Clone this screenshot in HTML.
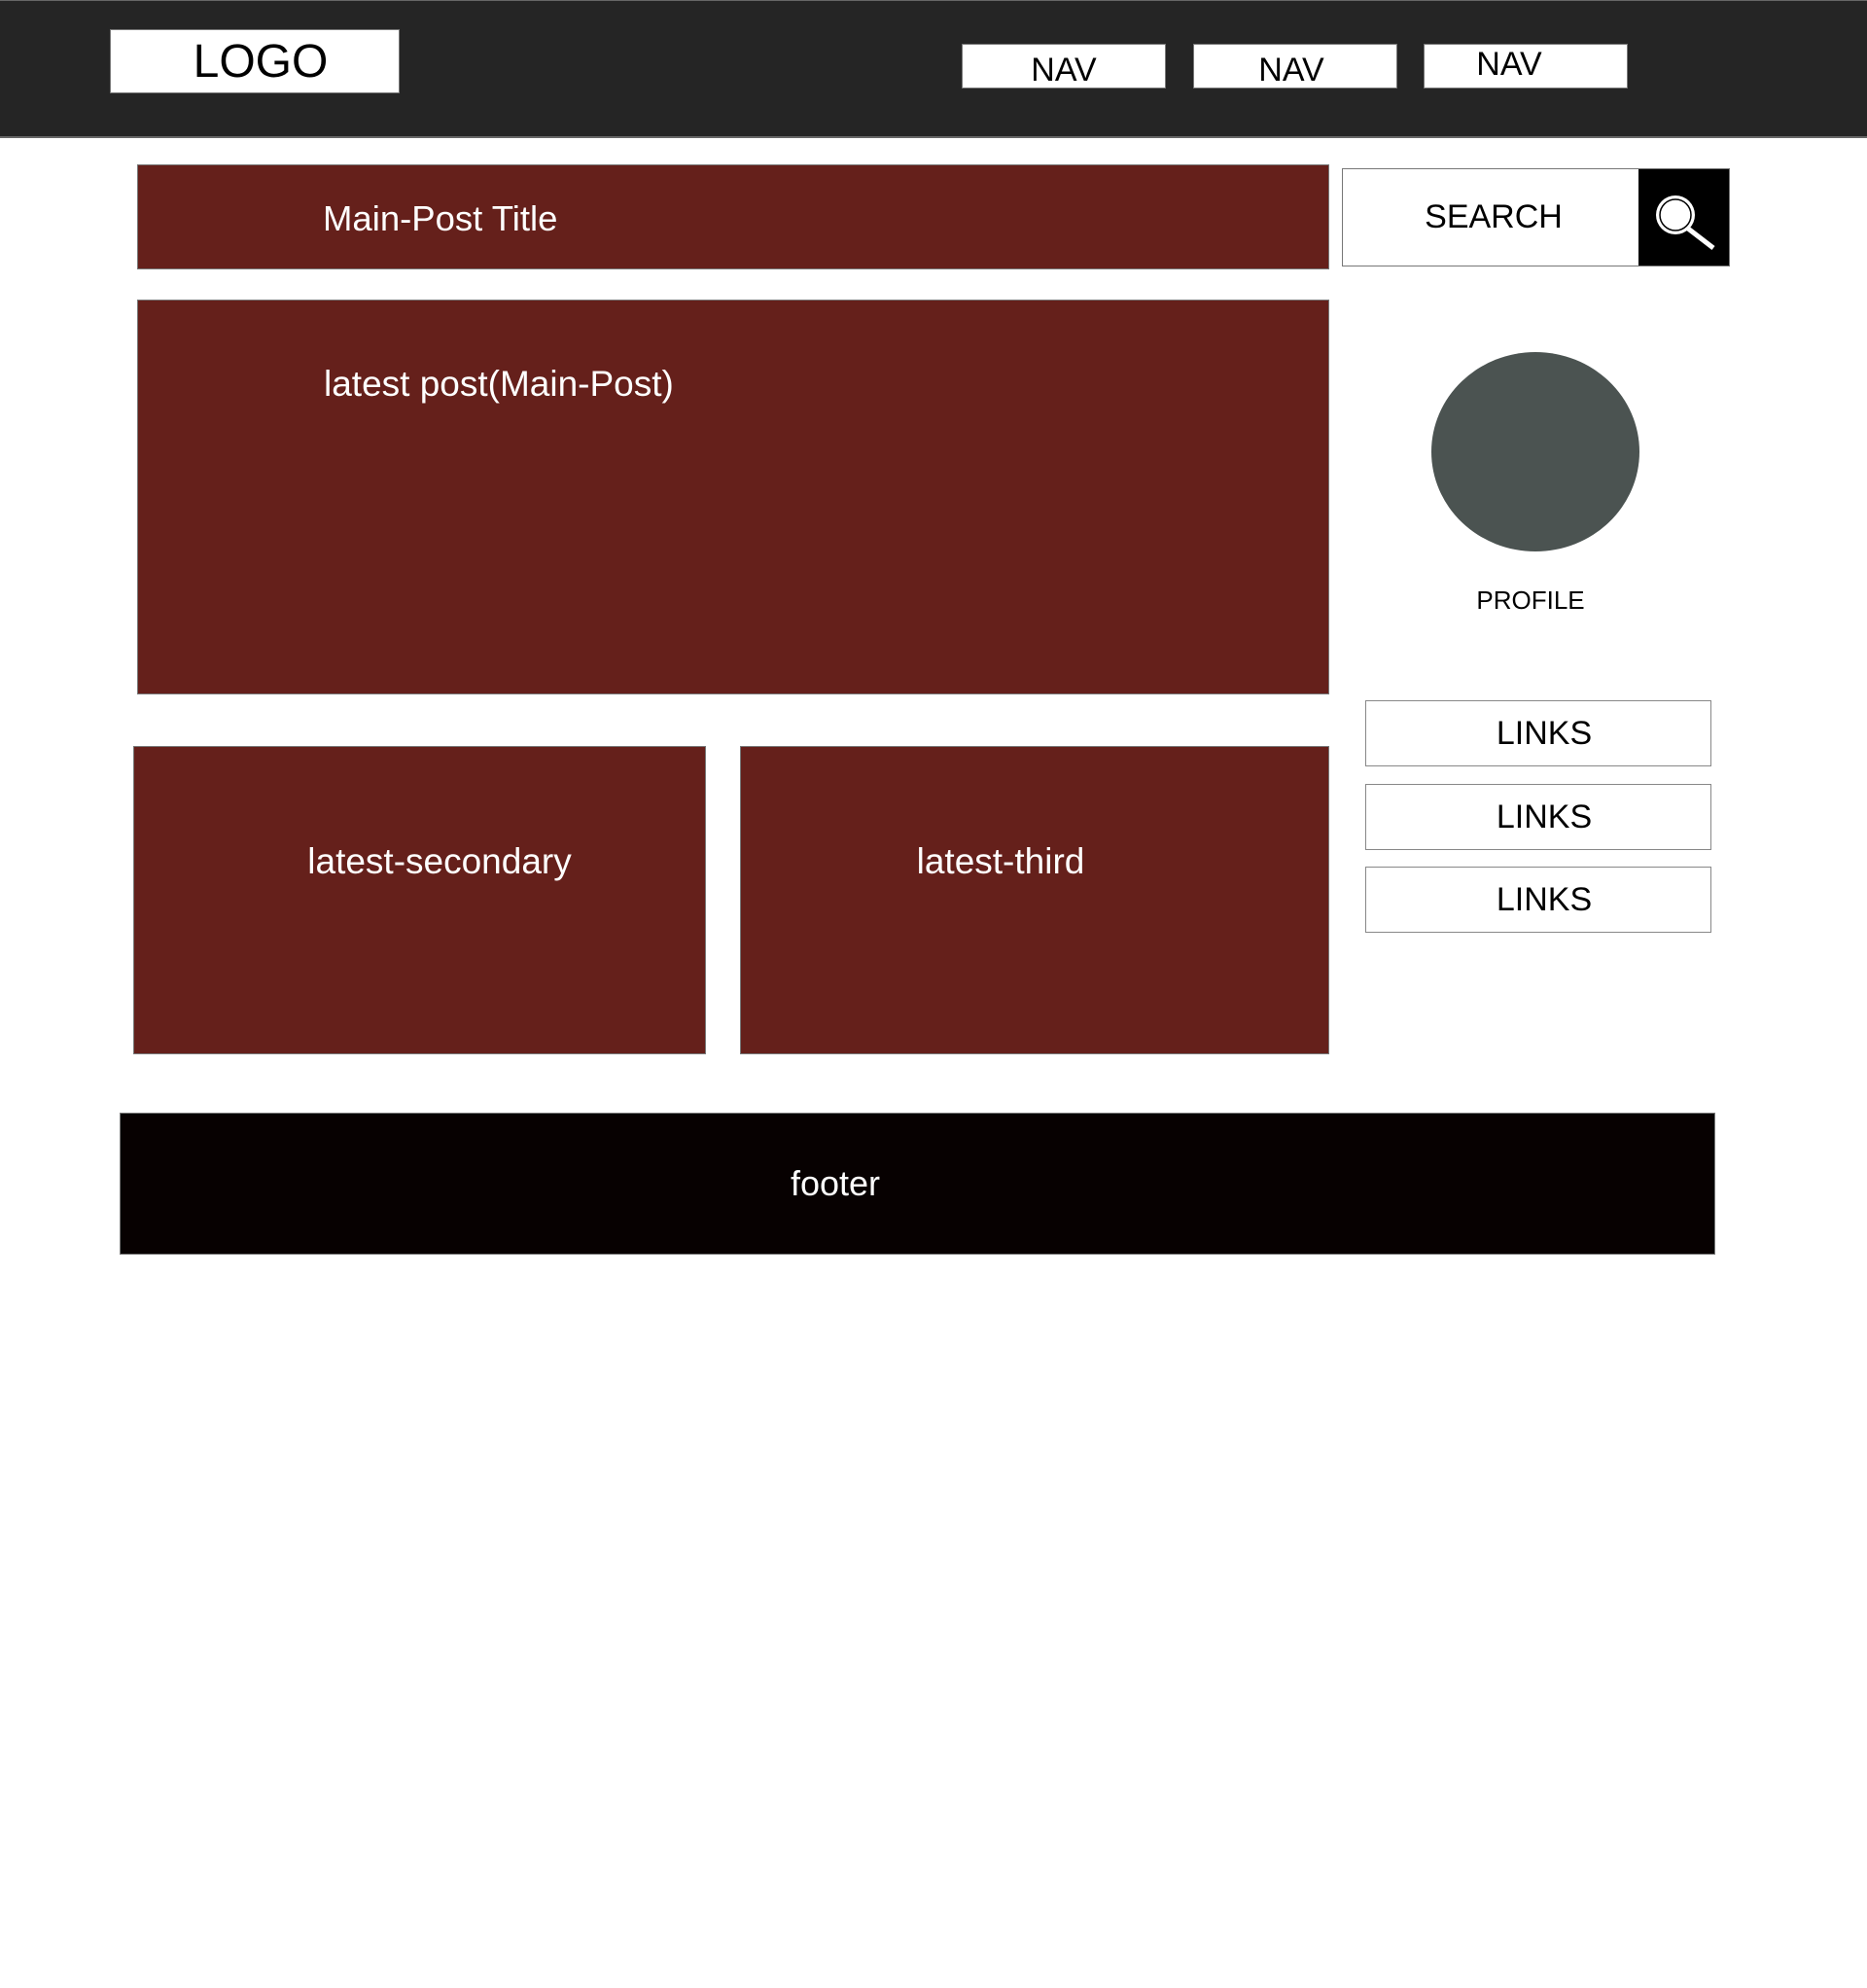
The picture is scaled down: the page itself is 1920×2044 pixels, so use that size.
<!DOCTYPE html>
<html><head><meta charset="utf-8"><style>
*{margin:0;padding:0;box-sizing:border-box}
body{width:1920px;height:2044px;background:#fff;position:relative;font-family:"Liberation Sans",Arial,sans-serif;overflow:hidden}
.a{position:absolute}
.red{background:#65201b;border:1px solid #777}
.t{position:absolute;white-space:nowrap;line-height:1}
.c{display:flex;align-items:center;justify-content:center}
</style></head><body>
<div class="a" style="left:0;top:0;width:1920px;height:142px;background:#252525;border-top:1px solid #666;border-bottom:2px solid #666"></div>
<div class="a c" style="left:113px;top:30px;width:298px;height:66px;background:#fff;border:1px solid #777;font-size:48px;color:#000;padding-left:12px">LOGO</div>
<div class="a c" style="left:989px;top:45px;width:210px;height:46px;background:#fff;border:1px solid #777;font-size:34px;padding-top:8px">NAV</div>
<div class="a c" style="left:1227px;top:45px;width:210px;height:46px;background:#fff;border:1px solid #777;font-size:34px;padding-top:8px;padding-right:8px">NAV</div>
<div class="a c" style="left:1464px;top:45px;width:210px;height:46px;background:#fff;border:1px solid #777;font-size:34px;padding-bottom:4px;padding-right:34px">NAV</div>

<div class="a red" style="left:141px;top:169px;width:1226px;height:108px"></div>
<div class="t" style="left:332px;top:207px;font-size:36.5px;color:#fff">Main-Post Title</div>

<div class="a" style="left:1380px;top:173px;width:399px;height:101px;border:1px solid #777;background:#fff"></div>
<div class="t" style="left:1383px;top:206px;width:306px;text-align:center;font-size:34px;color:#000">SEARCH</div>
<div class="a" style="left:1685px;top:173px;width:94px;height:101px;background:#000;border:1px solid #777;border-left:none"></div>
<svg class="a" style="left:1685px;top:173px" width="94" height="101" viewBox="0 0 94 101">
<line x1="51" y1="62" x2="77" y2="82" stroke="#fff" stroke-width="5"/>
<circle cx="38" cy="48" r="20" fill="#fff"/>
<circle cx="38" cy="48" r="16" fill="#fff" stroke="#000" stroke-width="1.5"/>
</svg>

<div class="a red" style="left:141px;top:308px;width:1226px;height:406px"></div>
<div class="t" style="left:333px;top:376px;font-size:37px;color:#fff">latest post(Main-Post)</div>

<div class="a" style="left:1472px;top:362px;width:214px;height:205px;border-radius:50%;background:#4b5351"></div>
<div class="t" style="left:1474px;top:604px;width:200px;text-align:center;font-size:26px;color:#000">PROFILE</div>

<div class="a c" style="left:1404px;top:720px;width:356px;height:68px;border:1px solid #888;font-size:34px;padding-left:12px">LINKS</div>
<div class="a c" style="left:1404px;top:806px;width:356px;height:68px;border:1px solid #888;font-size:34px;padding-left:12px">LINKS</div>
<div class="a c" style="left:1404px;top:891px;width:356px;height:68px;border:1px solid #888;font-size:34px;padding-left:12px">LINKS</div>

<div class="a red" style="left:137px;top:767px;width:589px;height:317px"></div>
<div class="t" style="left:137px;top:867px;width:630px;text-align:center;font-size:37px;color:#fff;">latest-secondary</div>
<div class="a red" style="left:761px;top:767px;width:606px;height:317px"></div>
<div class="t" style="left:761px;top:867px;width:536px;text-align:center;font-size:37px;color:#fff">latest-third</div>

<div class="a" style="left:123px;top:1144px;width:1641px;height:146px;background:#070101;border:1px solid #777"></div>
<div class="t" style="left:121px;top:1199px;width:1476px;text-align:center;font-size:36px;color:#fff">footer</div>
</body></html>
